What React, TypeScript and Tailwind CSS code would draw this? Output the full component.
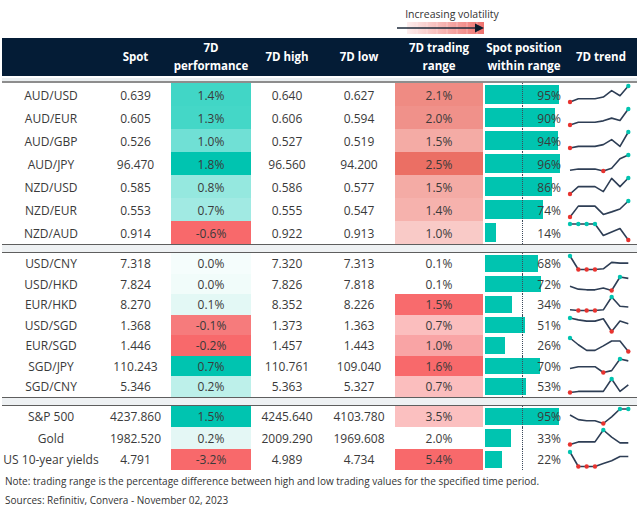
import React from "react";

type Row = {
  name: string;
  spot: string;
  perf: string;
  perfBg: string;
  high: string;
  low: string;
  range: string;
  rangeBg: string;
  pos: number;
  trend: number[];
};

const fx1: Row[] = [
  { name: "AUD/USD", spot: "0.639", perf: "1.4%", perfBg: "#41d6c6", high: "0.640", low: "0.627", range: "2.1%", rangeBg: "#ef8b83", pos: 95, trend: [0, 0.2, 0.2, 0.2, 0.31, 0.71, 0.39, 1] },
  { name: "AUD/EUR", spot: "0.605", perf: "1.3%", perfBg: "#44d7c7", high: "0.606", low: "0.594", range: "2.0%", rangeBg: "#f0918a", pos: 90, trend: [0, 0.17, 0.17, 0.17, 0.26, 0.43, 0.28, 1] },
  { name: "AUD/GBP", spot: "0.526", perf: "1.0%", perfBg: "#70e0d5", high: "0.527", low: "0.519", range: "1.5%", rangeBg: "#f4aba5", pos: 94, trend: [0, 0.1, 0.1, 0.1, 0.21, 0.52, 0.1, 1] },
  { name: "AUD/JPY", spot: "96.470", perf: "1.8%", perfBg: "#00c4b0", high: "96.560", low: "94.200", range: "2.5%", rangeBg: "#eb6f64", pos: 96, trend: [0.05, 0.12, 0.12, 0.12, 0, 0.17, 0.76, 1] },
  { name: "NZD/USD", spot: "0.585", perf: "0.8%", perfBg: "#95e8df", high: "0.586", low: "0.577", range: "1.5%", rangeBg: "#f4aba5", pos: 86, trend: [0, 0.46, 0.46, 0.46, 0.15, 0.98, 0.46, 1] },
  { name: "NZD/EUR", spot: "0.553", perf: "0.7%", perfBg: "#a1eae3", high: "0.555", low: "0.547", range: "1.4%", rangeBg: "#f6b2ad", pos: 74, trend: [0, 0.68, 0.68, 0.68, 0.16, 0.32, 0.5, 1] },
  { name: "NZD/AUD", spot: "0.914", perf: "-0.6%", perfBg: "#f8696b", high: "0.922", low: "0.913", range: "1.0%", rangeBg: "#f9cac7", pos: 14, trend: [1, 1, 1, 1, 0.28, 0.5, 0.72, 0] },
];

const fx2: Row[] = [
  { name: "USD/CNY", spot: "7.318", perf: "0.0%", perfBg: "#f5fdfc", high: "7.320", low: "7.313", range: "0.1%", rangeBg: "#ffffff", pos: 68, trend: [1, 0, 0, 0, 0.05, 0.53, 0.47, 0.47] },
  { name: "USD/HKD", spot: "7.824", perf: "0.0%", perfBg: "#f1fcfa", high: "7.826", low: "7.818", range: "0.1%", rangeBg: "#ffffff", pos: 72, trend: [0.31, 0.1, 0.05, 0.05, 0.18, 0, 1, 0.9] },
  { name: "EUR/HKD", spot: "8.270", perf: "0.1%", perfBg: "#e3f8f5", high: "8.352", low: "8.226", range: "1.5%", rangeBg: "#f86b6d", pos: 34, trend: [0.05, 0, 0, 0, 0.05, 1, 0.32, 0.26] },
  { name: "USD/SGD", spot: "1.368", perf: "-0.1%", perfBg: "#f67b7c", high: "1.373", low: "1.363", range: "0.7%", rangeBg: "#fbbebe", pos: 51, trend: [1, 0.86, 0.77, 0.77, 0.94, 0, 0.77, 0.57] },
  { name: "EUR/SGD", spot: "1.446", perf: "-0.2%", perfBg: "#f8696b", high: "1.457", low: "1.443", range: "1.0%", rangeBg: "#f9a4a5", pos: 26, trend: [1, 0.5, 0.08, 0.08, 0.42, 0.78, 0.78, 0] },
  { name: "SGD/JPY", spot: "110.243", perf: "0.7%", perfBg: "#00c4b0", high: "110.761", low: "109.040", range: "1.6%", rangeBg: "#f8696b", pos: 70, trend: [0.29, 0.43, 0.43, 0.43, 0, 0.14, 1, 0.86] },
  { name: "SGD/CNY", spot: "5.346", perf: "0.2%", perfBg: "#bdf0ea", high: "5.363", low: "5.327", range: "0.7%", rangeBg: "#fbbebe", pos: 53, trend: [0, 0.08, 0.08, 0.08, 0.08, 1, 0.08, 0.56] },
];

const other: Row[] = [
  { name: "S&P 500", spot: "4237.860", perf: "1.5%", perfBg: "#00c4b0", high: "4245.640", low: "4103.780", range: "3.5%", rangeBg: "#fbc0c0", pos: 95, trend: [0.59, 0.27, 0.19, 0.19, 0, 0.46, 1, 1] },
  { name: "Gold", spot: "1982.520", perf: "0.2%", perfBg: "#e4f7f5", high: "2009.290", low: "1969.608", range: "2.0%", rangeBg: "#ffffff", pos: 33, trend: [0, 0.18, 0.18, 0.18, 1, 0.51, 0.11, 0.11] },
  { name: "US 10-year yields", spot: "4.791", perf: "-3.2%", perfBg: "#f8696b", high: "4.989", low: "4.734", range: "5.4%", rangeBg: "#f8696b", pos: 22, trend: [1, 0, 0, 0, 0.2, 0.4, 0.69, 0.69] },
];

function Spark({ values, h }: { values: number[]; h: number }) {
  const top = 3;
  const span = h - 7;
  const pts = values.map((v, i) => [3 + i * 8.33, top + (1 - v) * span]);
  const max = Math.max(...values);
  const min = Math.min(...values);
  return (
    <svg width={66} height={h} className="ml-[2px]">
      <polyline
        points={pts.map((p) => p.join(",")).join(" ")}
        fill="none"
        stroke="#2e3e55"
        strokeWidth={1.6}
        strokeLinejoin="round"
      />
      {pts.map((p, i) =>
        values[i] === max ? (
          <circle key={i} cx={p[0]} cy={p[1]} r={2.2} fill="#00c4b0" />
        ) : values[i] === min ? (
          <circle key={i} cx={p[0]} cy={p[1]} r={2.2} fill="#e8332f" />
        ) : null
      )}
    </svg>
  );
}

function TableRow({ r, h, hc }: { r: Row; h: number; hc: string }) {
  return (
    <div className={`flex ${hc} text-[12px] text-[#3a3a3a]`}>
      <div className="w-[98px] pt-[2px] flex items-center justify-center whitespace-nowrap">{r.name}</div>
      <div className="w-[71px] pt-[2px] flex items-center justify-center">{r.spot}</div>
      <div className="w-[80px] pt-[2px] flex items-center justify-center" style={{ background: r.perfBg }}>
        {r.perf}
      </div>
      <div className="w-[72px] pt-[2px] flex items-center justify-center">{r.high}</div>
      <div className="w-[72px] pt-[2px] flex items-center justify-center">{r.low}</div>
      <div className="w-[88px] pt-[2px] flex items-center justify-center" style={{ background: r.rangeBg }}>
        {r.range}
      </div>
      <div className="w-[82px] relative flex items-center">
        <div className="ml-[2px] h-[calc(100%-4px)] bg-[#00c4b0]" style={{ width: `${r.pos * 0.78}px` }} />
        <div className="absolute left-[39px] top-0 bottom-0 border-l border-dotted border-[#3d4a5c]" />
        <span className="absolute right-[4px] top-[2px] bottom-0 flex items-center">{r.pos}%</span>
      </div>
      <div className="w-[72px] flex items-center">
        <Spark values={r.trend} h={h} />
      </div>
    </div>
  );
}

function Separator() {
  return <div className="h-[9px] border-t-[1.5px] border-b-[1.5px] border-[#5e5e5e] bg-[#eef1f3]" />;
}

export default function App() {
  return (
    <div className="w-[641px] h-[510px] bg-white overflow-hidden font-['Open_Sans',sans-serif] text-[#3a3a3a]">
      {/* volatility legend */}
      <div className="pl-[397px] pt-[7px] h-[38px]">
        <div className="w-[110px] text-center text-[10.5px] leading-[14px] text-[#333]">Increasing volatility</div>
        <svg width={92} height={15}>
          <defs>
            <linearGradient id="vol" x1="0" x2="1" y1="0" y2="0">
              <stop offset="0" stopColor="#fdeeee" />
              <stop offset="1" stopColor="#ef716d" />
            </linearGradient>
          </defs>
          <rect x={10} y={1} width={77} height={12} fill="url(#vol)" />
          {[20, 30, 40, 50, 60, 70, 80].map((x) => (
            <line key={x} x1={x} x2={x} y1={1} y2={13} stroke="#ffffff" strokeOpacity={0.35} strokeWidth={1} />
          ))}
          <line x1={0} x2={80} y1={7} y2={7} stroke="#1d2a3a" strokeWidth={1.3} />
          <polygon points="78,2.5 87,7 78,11.5" fill="#0d1b2c" />
        </svg>
      </div>

      <div className="ml-[2px] w-[635px]">
        {/* header */}
        <div className="flex h-[38px] bg-[#041c36] text-white font-bold text-[11.5px] leading-[18px] text-center">
          <div className="w-[98px]" />
          <div className="w-[71px] flex items-center justify-center">Spot</div>
          <div className="w-[80px] flex items-center justify-center">7D<br />performance</div>
          <div className="w-[72px] flex items-center justify-center">7D high</div>
          <div className="w-[72px] flex items-center justify-center">7D low</div>
          <div className="w-[88px] flex items-center justify-center">7D trading<br />range</div>
          <div className="w-[82px] flex items-center justify-center whitespace-nowrap">Spot position<br />within range</div>
          <div className="w-[72px] flex items-center justify-center">7D trend</div>
        </div>
        <div className="mt-[2px] h-[5px] bg-[#eaeef0] border-b-2 border-[#8d8d8d]" />

        {fx1.map((r) => (
          <TableRow key={r.name} r={r} h={23} hc="h-[23px]" />
        ))}
        <Separator />
        {fx2.map((r) => (
          <TableRow key={r.name} r={r} h={20.5} hc="h-[20.5px]" />
        ))}
        <Separator />
        {other.map((r) => (
          <TableRow key={r.name} r={r} h={21.5} hc="h-[21.5px]" />
        ))}
      </div>

      <div className="pl-[5px] pt-[2px] text-[10px] leading-[18.5px] text-[#333]">
        <div>Note: trading range is the percentage difference between high and low trading values for the specified time period.</div>
        <div>Sources: Refinitiv, Convera - November 02, 2023</div>
      </div>
    </div>
  );
}
